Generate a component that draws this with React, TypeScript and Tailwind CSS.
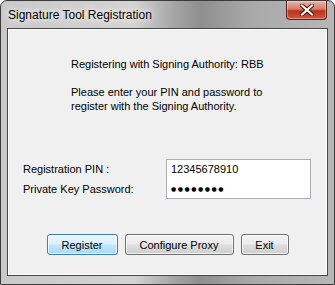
import React from "react";

function CloseButton() {
  return (
    <div className="absolute right-[7px] top-0 flex h-[19px] w-[41px] items-center justify-center rounded-b-[4px] border border-t-0 border-[#5b2318] bg-[linear-gradient(#eab3a6_0%,#d77a67_45%,#b8321c_55%,#d4563f_100%)] shadow-[inset_0_0_0_1px_rgba(255,255,255,0.35)]">
      <svg width="14" height="12" viewBox="0 0 14 12">
        <path d="M2 1.5 L12 10.5 M12 1.5 L2 10.5" stroke="#3a1008" strokeWidth="4" strokeLinecap="square" />
        <path d="M2 1.5 L12 10.5 M12 1.5 L2 10.5" stroke="#ffffff" strokeWidth="2.2" strokeLinecap="square" />
      </svg>
    </div>
  );
}

function Button({ label, width, primary }: { label: string; width: string; primary?: boolean }) {
  return (
    <div
      className={
        "flex h-[21px] items-center justify-center rounded-[3px] border text-[11px] text-black " +
        width +
        (primary
          ? " border-[#3c7fb1] bg-[linear-gradient(#eaf6fd_0%,#d9f0fc_45%,#bee6fd_55%,#a7d9f5_100%)] shadow-[inset_0_0_0_1px_rgba(255,255,255,0.7)]"
          : " border-[#707070] bg-[linear-gradient(#f2f2f2_0%,#ebebeb_45%,#dddddd_55%,#cfcfcf_100%)] shadow-[inset_0_0_0_1px_rgba(255,255,255,0.7)]")
      }
    >
      {label}
    </div>
  );
}

export default function App() {
  return (
    <div className="relative h-[285px] w-[335px] overflow-hidden rounded-t-[7px] border border-[#3b3b3b] bg-[linear-gradient(90deg,#c9c9c9_0%,#d3d3d3_40%,#a5a5a5_52%,#8f8f8f_60%,#a9a9a9_75%,#b7b7b7_100%)] font-['Liberation_Sans',Arial,sans-serif]">
      <div className="flex h-[27px] items-center pl-[7px] text-[12px] text-black [text-shadow:0_0_6px_#ffffff,0_0_10px_#ffffff]">
        Signature Tool Registration
      </div>
      <CloseButton />
      <div className="mx-[6px] mb-[6px] h-[248px] border border-[#474747] bg-[linear-gradient(#9a9a9a,#8a9a9a_85%,#5aa3a3)] p-0">
        <div className="h-full border border-[#ffffff] bg-[#f0f0f0] text-[11px] leading-[14px] text-black">
          <div className="ml-[62px] pt-[27px]">
            <div>Registering with Signing Authority: RBB</div>
            <div className="mt-[14px]">Please enter your PIN and password to</div>
            <div>register with the Signing Authority.</div>
          </div>
          <div className="mt-[46px] flex flex-col">
            <div className="flex h-[20px] items-center">
              <div className="w-[157px] pl-[14px]">Registration PIN :</div>
              <div className="flex h-[21px] w-[145px] items-center border border-[#abadb3] bg-white pl-[4px]">12345678910</div>
            </div>
            <div className="flex h-[20px] items-center">
              <div className="w-[157px] pl-[14px]">Private Key Password:</div>
              <div className="flex h-[20px] w-[145px] items-center border border-[#abadb3] border-t-0 bg-white pl-[4px] font-['DejaVu_Sans',sans-serif] text-[6px] tracking-[1.5px]">
                ●●●●●●●●
              </div>
            </div>
          </div>
          <div className="mt-[35px] flex justify-center gap-[7px]">
            <Button label="Register" width="w-[71px]" primary />
            <Button label="Configure Proxy" width="w-[109px]" />
            <Button label="Exit" width="w-[48px]" />
          </div>
        </div>
      </div>
    </div>
  );
}
